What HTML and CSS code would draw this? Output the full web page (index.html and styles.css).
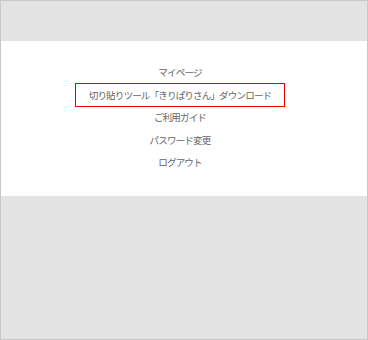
FILE: index.html
```html
<!DOCTYPE html>
<html lang="ja">
<head>
<meta charset="utf-8">
<link rel="stylesheet" href="styles.css">
</head>
<body>
<div class="frame">
  <div class="top"></div>
  <nav class="menu">
    <ul class="menu-list">
      <li class="menu-item"><a class="menu-link" href="#">マイページ</a></li>
      <li class="menu-item"><a class="menu-link is-focus" href="#">切り貼りツール「きりぱりさん」ダウンロード</a></li>
      <li class="menu-item"><a class="menu-link" href="#">ご利用ガイド</a></li>
      <li class="menu-item"><a class="menu-link" href="#">パスワード変更</a></li>
      <li class="menu-item"><a class="menu-link" href="#">ログアウト</a></li>
    </ul>
  </nav>
</div>
</body>
</html>
```
FILE: styles.css
```css
html, body {
  margin: 0;
  padding: 0;
}
body {
  width: 368px;
  height: 340px;
  font-family: "Noto Sans CJK JP", "Noto Sans", sans-serif;
}
.frame {
  box-sizing: border-box;
  width: 368px;
  height: 340px;
  border: 1px solid #c8c8c8;
  background: #e3e3e3;
}
.top {
  height: 40px;
}
.menu {
  background: #fff;
  padding: 20px 8px 22px 0;
}
.menu-list {
  list-style: none;
  margin: 0;
  padding: 0;
  text-align: center;
}
.menu-item {
  height: 22.5px;
  line-height: 22px;
  font-size: 9.6px;
}
.menu-link {
  display: inline-block;
  color: #666;
  text-decoration: none;
  padding: 0 13px;
  line-height: 22px;
  letter-spacing: -0.9px;
}
.menu-link.is-focus {
  outline: 1px solid #e60000;
}
```
